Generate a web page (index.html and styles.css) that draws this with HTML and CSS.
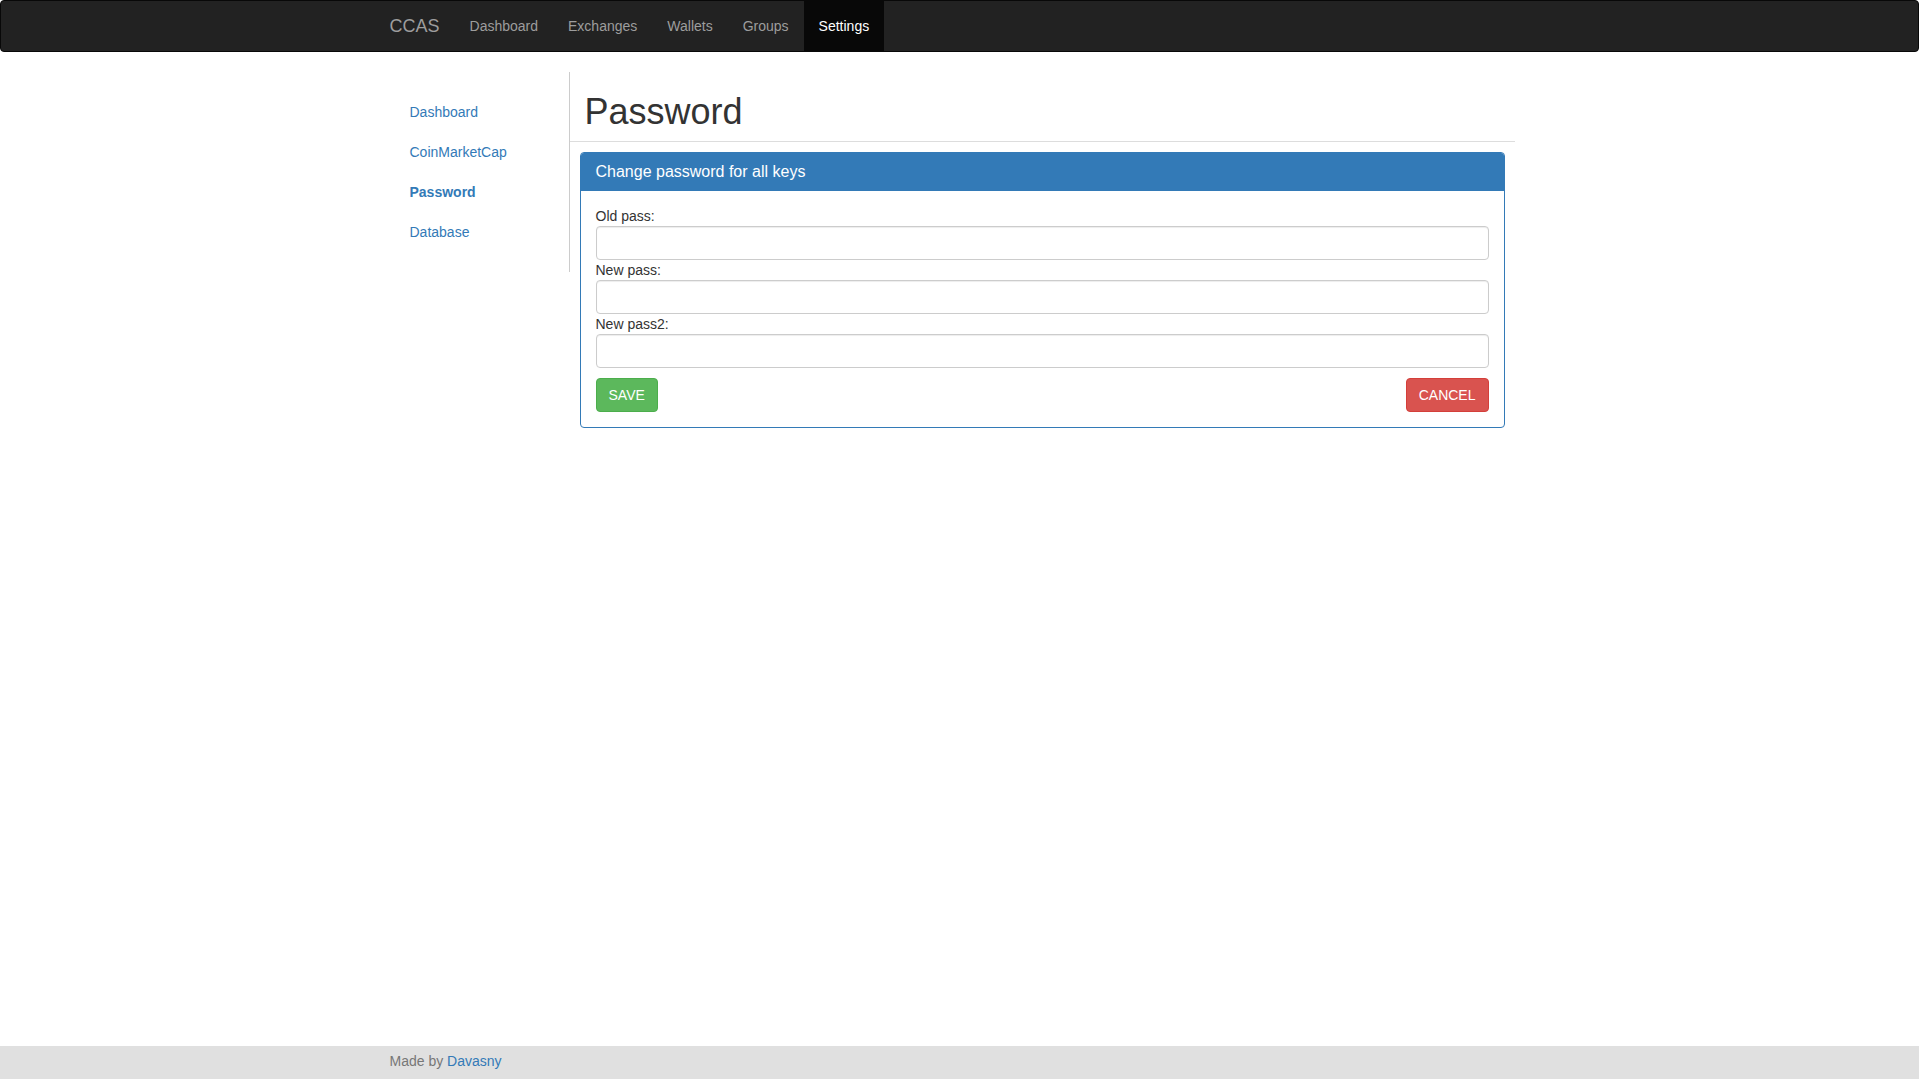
FILE: index.html
```html
<!DOCTYPE html>
<html lang="en">
<head>
<meta charset="utf-8">
<title>CCAS - Password</title>
<link rel="stylesheet" href="styles.css">
</head>
<body>
<nav class="navbar">
  <div class="container nav-inner">
    <a class="brand" href="#">CCAS</a>
    <ul class="nav-links">
      <li><a href="#">Dashboard</a></li>
      <li><a href="#">Exchanges</a></li>
      <li><a href="#">Wallets</a></li>
      <li><a href="#">Groups</a></li>
      <li class="active"><a href="#">Settings</a></li>
    </ul>
  </div>
</nav>

<div class="container content">
  <div class="row">
    <aside class="sidebar">
      <ul class="side-nav">
        <li><a href="#">Dashboard</a></li>
        <li><a href="#">CoinMarketCap</a></li>
        <li class="current"><a href="#">Password</a></li>
        <li><a href="#">Database</a></li>
      </ul>
    </aside>
    <main class="main">
      <div class="page-header"><h1>Password</h1></div>
      <div class="panel">
        <div class="panel-heading">Change password for all keys</div>
        <div class="panel-body">
          <label class="field-label" for="old">Old pass:</label>
          <input class="form-control" type="password" id="old">
          <label class="field-label" for="new1">New pass:</label>
          <input class="form-control" type="password" id="new1">
          <label class="field-label" for="new2">New pass2:</label>
          <input class="form-control" type="password" id="new2">
          <div class="actions">
            <button class="btn btn-success" type="button">SAVE</button>
            <button class="btn btn-danger" type="button">CANCEL</button>
          </div>
        </div>
      </div>
    </main>
  </div>
</div>

<footer class="footer">
  <div class="container">Made by <a href="#">Davasny</a></div>
</footer>
</body>
</html>
```

FILE: styles.css
```css
* { box-sizing: border-box; }

html, body { height: 100%; }

body {
  margin: 0;
  font-family: "Liberation Sans", Arial, Helvetica, sans-serif;
  font-size: 14px;
  line-height: 20px;
  color: #333;
  background: #fff;
  display: flex;
  flex-direction: column;
  min-height: 100vh;
}

a { color: #337ab7; text-decoration: none; }

.container {
  width: 1170px;
  margin: 0 auto;
  padding: 0 15px;
}

/* Navbar */
.navbar {
  background: #222;
  border: 1px solid #080808;
  border-radius: 4px;
  min-height: 52px;
  margin-bottom: 20px;
  flex: 0 0 auto;
}

.nav-inner {
  display: flex;
  align-items: stretch;
  height: 50px;
}

.brand {
  margin-left: -15px;
  padding: 15px 15px;
  font-size: 18px;
  line-height: 20px;
  height: 50px;
  color: #9d9d9d;
}

.nav-links {
  display: flex;
  list-style: none;
  margin: 0;
  padding: 0;
}

.nav-links a {
  display: block;
  padding: 15px 15px;
  font-size: 14px;
  line-height: 20px;
  color: #9d9d9d;
}

.nav-links .active a {
  background: #080808;
  color: #fff;
}

/* Content */
.content { flex: 0 0 auto; }

.row {
  display: flex;
  margin: 0 -15px;
  align-items: flex-start;
}

.sidebar {
  width: 195px;
  flex: 0 0 195px;
  padding: 20px 15px;
  border-right: 1px solid #ccc;
}

.side-nav {
  list-style: none;
  margin: 0;
  padding: 0;
}

.side-nav a {
  display: block;
  padding: 10px 20px;
  line-height: 20px;
  color: #337ab7;
}

.side-nav .current a { font-weight: bold; }

.main {
  width: 945px;
  flex: 0 0 945px;
}

.page-header {
  border-bottom: 1px solid #ddd;
  margin: 0 0 10px;
  padding: 0 15px;
}

.page-header h1 {
  margin: 20px 0 9px;
  font-size: 36px;
  font-weight: 500;
  line-height: 1.1;
  color: #333;
}

/* Panel */
.panel {
  margin: 0 10px;
  border: 1px solid #337ab7;
  border-radius: 4px;
  background: #fff;
}

.panel-heading {
  background: #337ab7;
  color: #fff;
  padding: 10px 15px;
  font-size: 16px;
  line-height: 1.1;
  border-bottom: 1px solid #337ab7;
  border-radius: 3px 3px 0 0;
}

.panel-body { padding: 15px; }

.field-label {
  display: block;
  margin: 0;
  font-weight: normal;
  line-height: 20px;
}

.form-control {
  display: block;
  width: 100%;
  height: 34px;
  margin: 0;
  padding: 6px 12px;
  font: inherit;
  color: #555;
  background: #fff;
  border: 1px solid #ccc;
  border-radius: 4px;
  box-shadow: inset 0 1px 1px rgba(0, 0, 0, 0.075);
}

.actions {
  display: flex;
  justify-content: space-between;
  margin-top: 10px;
}

.btn {
  display: inline-block;
  padding: 6px 12px;
  font-family: inherit;
  font-size: 14px;
  line-height: 20px;
  border: 1px solid transparent;
  border-radius: 4px;
  color: #fff;
  cursor: pointer;
}

.btn-success { background: #5cb85c; border-color: #4cae4c; }
.btn-danger { background: #d9534f; border-color: #d43f3a; }

/* Footer */
.footer {
  margin-top: auto;
  background: #e0e0e0;
  color: #777;
  padding: 5px 0 8px;
  line-height: 20px;
}
```
